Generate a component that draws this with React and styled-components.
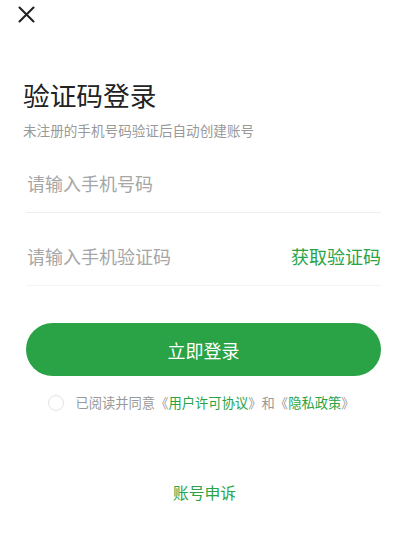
import styled, { createGlobalStyle } from 'styled-components';

const GlobalStyle = createGlobalStyle`
  html, body {
    margin: 0;
    padding: 0;
    background: #fff;
  }
  * {
    box-sizing: border-box;
  }
`;

const green = '#29a346';

// Вся страница
const Page = styled.div`
  width: 403px;
  min-height: 535px;
  background: #fff;
  font-family: "Noto Sans CJK SC", "Noto Sans", sans-serif;
  color: #222;
  display: flex;
  flex-direction: column;
`;

const TopBar = styled.div`
  display: flex;
  padding: 6px 0 0 18px;
  height: 23px;
`;

const CloseButton = styled.button`
  width: 17px;
  height: 17px;
  padding: 0;
  border: none;
  background: none;
  display: flex;
  cursor: pointer;
`;

const Header = styled.div`
  display: flex;
  flex-direction: column;
  padding-left: 23px;
`;

const Title = styled.h1`
  margin: 56px 0 0;
  font-size: 26.7px;
  line-height: 32px;
  font-weight: 400;
  color: #222;
`;

const Subtitle = styled.p`
  margin: 9px 0 0;
  font-size: 13.6px;
  line-height: 20px;
  color: #999;
`;

const Form = styled.div`
  display: flex;
  flex-direction: column;
  margin: 0 22px 0 26px;
`;

// Строка поля ввода с нижней линией
const Field = styled.div`
  display: flex;
  align-items: center;
  padding: 31px 0 17px;
  border-bottom: 1px solid ${(p) => (p.$faint ? '#f4f4f4' : '#eeeeee')};
`;

const Input = styled.input`
  flex: 1;
  min-width: 0;
  border: none;
  outline: none;
  padding: 0 0 0 1px;
  font-family: inherit;
  font-size: 18px;
  line-height: 24px;
  height: 24px;
  color: #222;
  background: transparent;

  &::placeholder {
    color: #a6a6a6;
  }
`;

const CodeLink = styled.span`
  font-size: 18px;
  line-height: 24px;
  color: ${green};
  white-space: nowrap;
`;

const SubmitButton = styled.button`
  margin-top: 37px;
  height: 53px;
  border: none;
  border-radius: 27px;
  background: ${green};
  color: #fff;
  font-family: inherit;
  font-size: 18px;
  cursor: pointer;
`;

const Agreement = styled.label`
  margin-top: 19px;
  display: flex;
  align-items: center;
  justify-content: center;
  gap: 11px;
  padding-right: 4px;
  font-size: 13.3px;
  line-height: 16px;
  color: #999;
`;

const Radio = styled.span`
  width: 16px;
  height: 16px;
  border-radius: 50%;
  border: 1px solid #e3e3e3;
  flex-shrink: 0;
`;

const Link = styled.span`
  color: ${green};
`;

const Appeal = styled.div`
  margin-top: 72px;
  text-align: center;
  font-size: 15.8px;
  line-height: 20px;
  color: ${green};
  padding-left: 2px;
`;

const App = () => {
  return (
    <Page>
      <GlobalStyle />
      <TopBar>
        <CloseButton aria-label="关闭">
          <svg width="17" height="17" viewBox="0 0 17 17">
            <path d="M1.5 1.5 L15.5 15.5 M15.5 1.5 L1.5 15.5" stroke="#222" strokeWidth="2.1" strokeLinecap="round" />
          </svg>
        </CloseButton>
      </TopBar>
      <Header>
        <Title>验证码登录</Title>
        <Subtitle>未注册的手机号码验证后自动创建账号</Subtitle>
      </Header>
      <Form>
        <Field>
          <Input placeholder="请输入手机号码" />
        </Field>
        <Field $faint>
          <Input placeholder="请输入手机验证码" />
          <CodeLink>获取验证码</CodeLink>
        </Field>
        <SubmitButton>立即登录</SubmitButton>
        <Agreement>
          <Radio />
          <span>
            已阅读并同意《<Link>用户许可协议</Link>》和《<Link>隐私政策</Link>》
          </span>
        </Agreement>
        <Appeal>账号申诉</Appeal>
      </Form>
    </Page>
  );
};

export default App;
